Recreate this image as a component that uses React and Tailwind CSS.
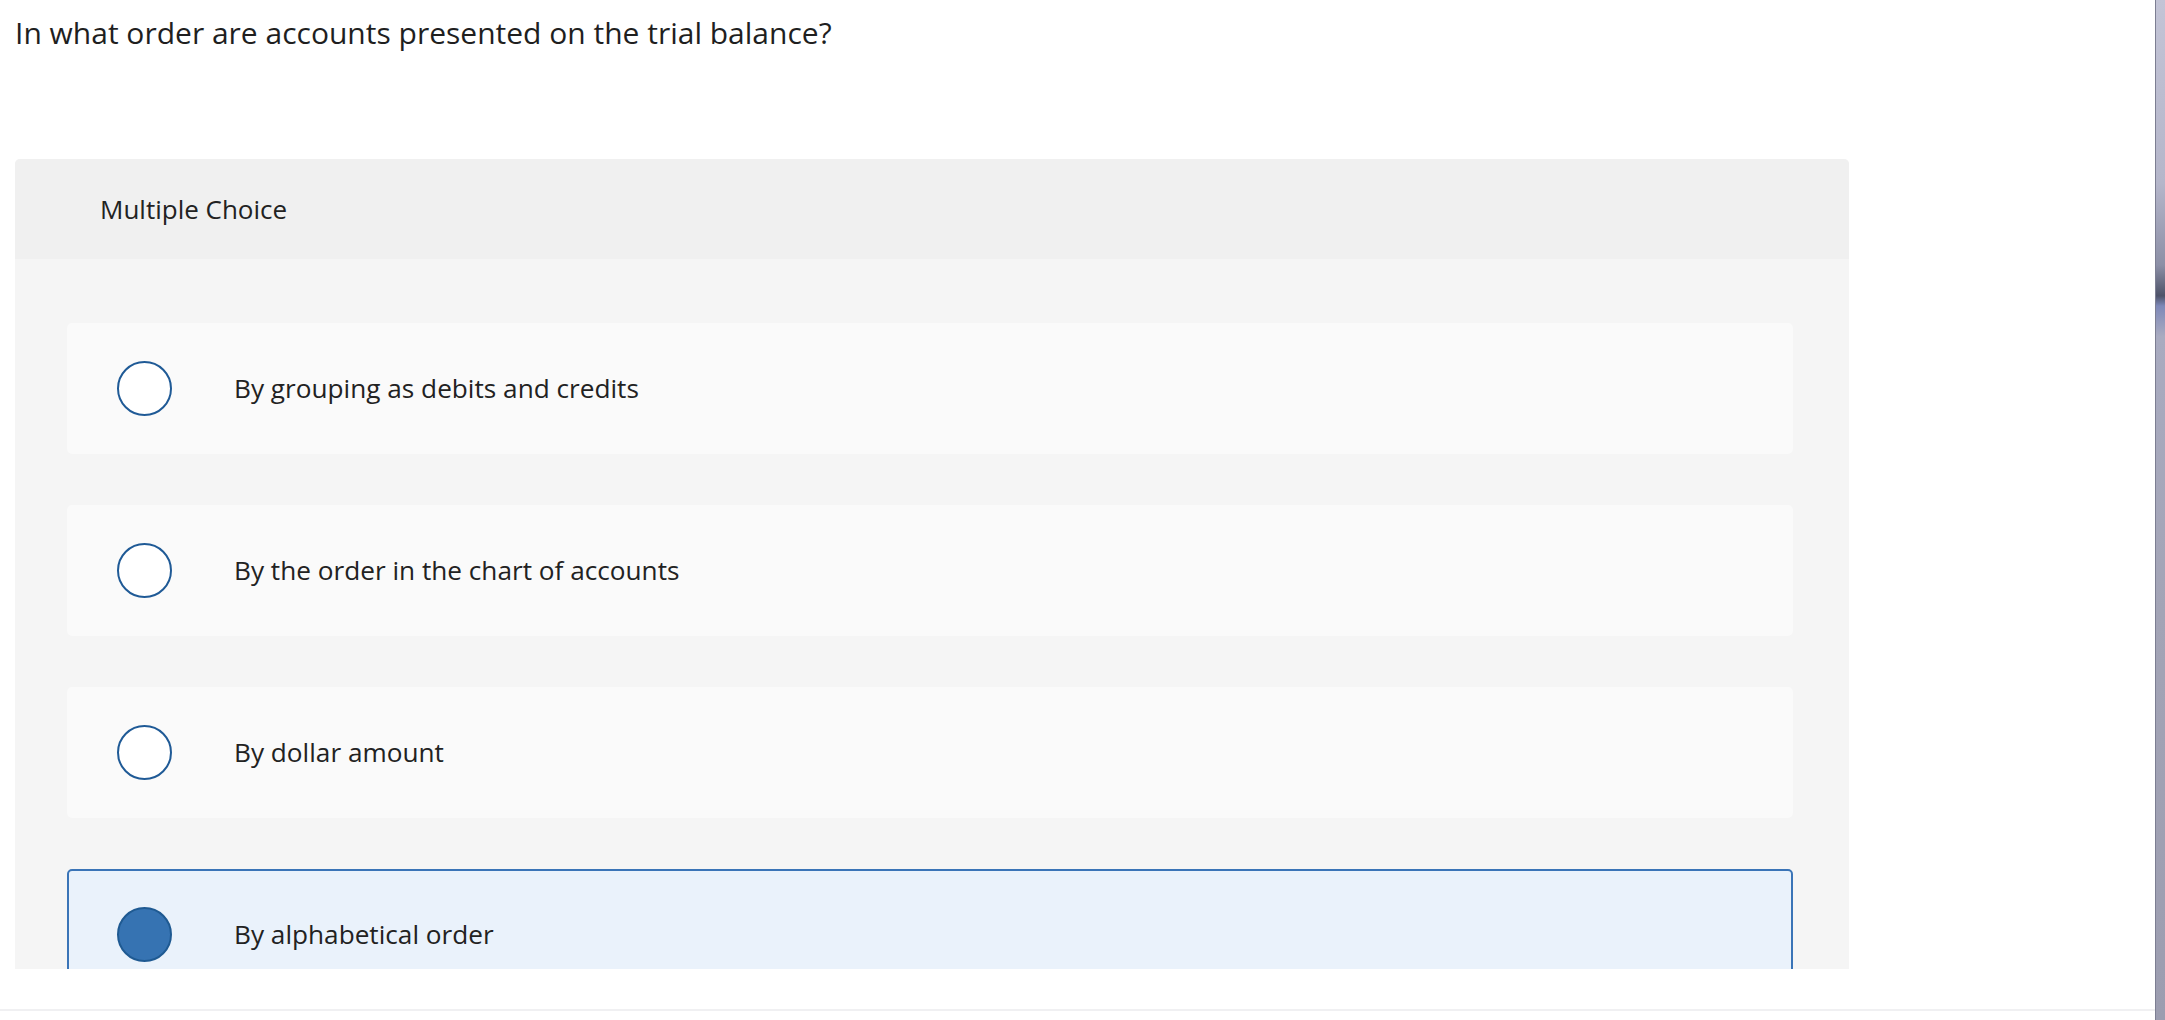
import React from "react";

const options = [
  { text: "By grouping as debits and credits", selected: false },
  { text: "By the order in the chart of accounts", selected: false },
  { text: "By dollar amount", selected: false },
  { text: "By alphabetical order", selected: true },
];

function Option({ text, selected }) {
  return (
    <div
      className={
        selected
          ? "flex h-[131px] shrink-0 items-center rounded-[5px] border-2 border-[#3a74b7] bg-[#eaf2fb] pl-[48px]"
          : "flex h-[131px] shrink-0 items-center rounded-[5px] bg-[#fafafa] pl-[50px]"
      }
    >
      <span
        className={
          selected
            ? "block h-[55px] w-[55px] shrink-0 rounded-full border-2 border-[#1f5a92] bg-[#3673b2]"
            : "block h-[55px] w-[55px] shrink-0 rounded-full border-2 border-[#1f5a96] bg-white"
        }
      />
      <span className="ml-[62px] text-[26.2px] leading-none text-[#222]">{text}</span>
    </div>
  );
}

export default function App() {
  return (
    <div
      className="flex h-[1020px] w-full overflow-hidden bg-white"
      style={{ fontFamily: "'Open Sans', Lato, sans-serif" }}
    >
      <div className="flex min-w-0 flex-1 flex-col">
        <h1 className="pl-[15px] pt-[14px] text-[30px] font-normal leading-[38px] text-[#1f1f1f]">
          In what order are accounts presented on the trial balance?
        </h1>
        <div className="ml-[15px] mt-[107px] flex h-[810px] w-[1834px] shrink-0 flex-col overflow-hidden rounded-t-[5px] bg-[#f5f5f5]">
          <div className="flex h-[100px] shrink-0 items-center bg-[#f0f0f0] pl-[85px] text-[26px] text-[#222]">
            Multiple Choice
          </div>
          <div className="flex flex-col gap-[51px] pl-[52px] pt-[64px]">
            {options.map((o) => (
              <div key={o.text} className="w-[1726px]">
                <Option text={o.text} selected={o.selected} />
              </div>
            ))}
          </div>
        </div>
        <div className="mt-[40px] h-[2px] w-full bg-[#f0f0f2]" />
      </div>
      <div className="w-[10px] shrink-0 border-l border-[#7c7e92] bg-[linear-gradient(to_bottom,#c3c4d6_0%,#b5b6ca_18%,#8c8fa6_26%,#4e5369_29%,#7e88b8_30%,#a9abc0_33%,#a3a4b6_60%,#9c9db0_100%)]" />
    </div>
  );
}
